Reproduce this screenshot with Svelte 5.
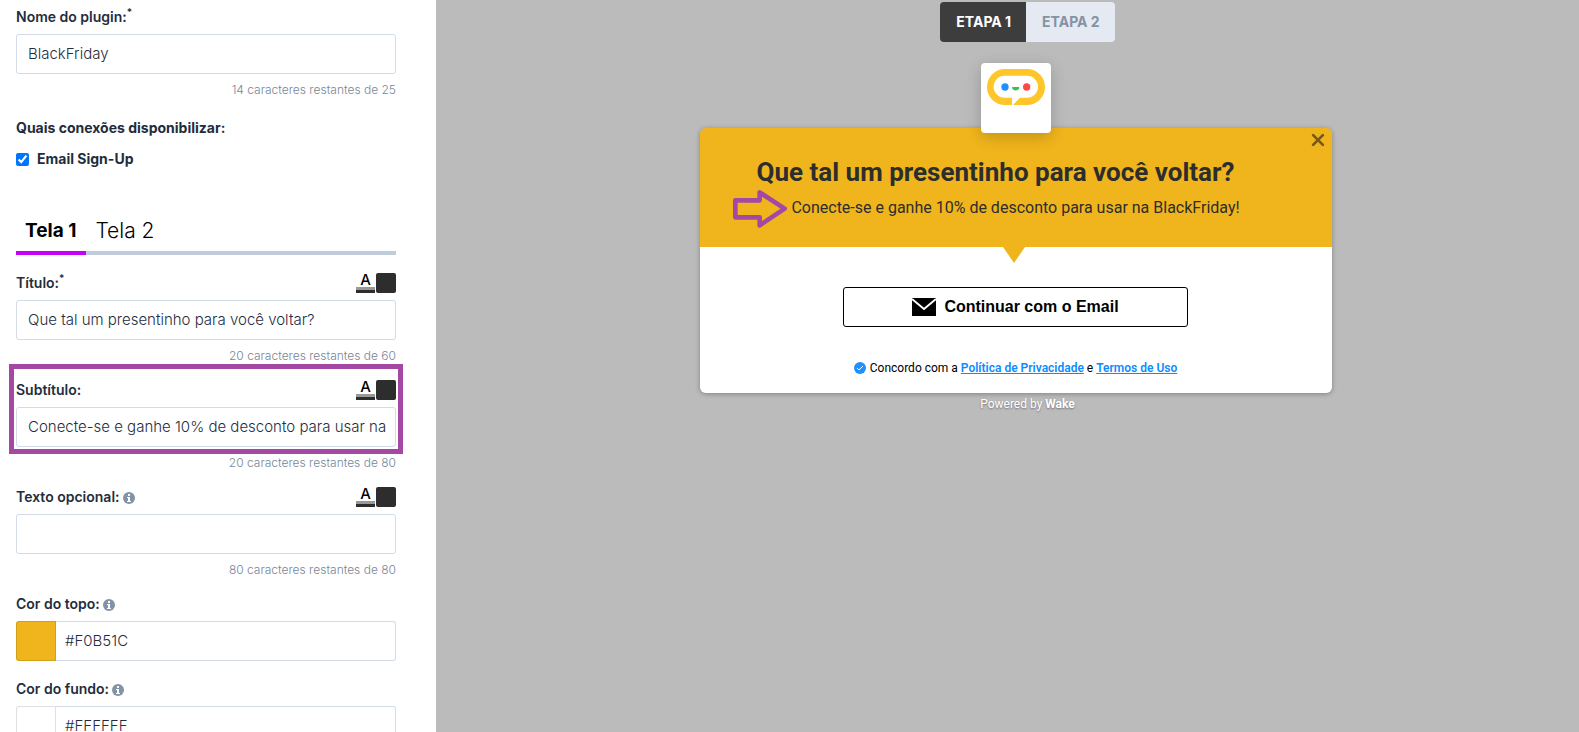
<script>
let pluginName = $state('BlackFriday')
let emailSignUp = $state(true)
let activeTab = $state(0)
let activeStep = $state(0)
let title = $state('Que tal um presentinho para você voltar?')
let subtitle = $state('Conecte-se e ganhe 10% de desconto para usar na BlackFriday!')
let optionalText = $state('')
let topColor = $state('#F0B51C')
let bottomColor = $state('#FFFFFF')

const tabs = ['Tela 1', 'Tela 2']
const steps = ['ETAPA 1', 'ETAPA 2']
</script>

{#snippet info()}
    <svg class="info" viewBox="0 0 12 12" aria-hidden="true">
        <circle cx="6" cy="6" r="6" />
        <path d="M5 2h2v2H5zM4 5h3v4h1v1H4V9h1V6H4z" fill="#fff" />
    </svg>
{/snippet}

{#snippet colorTools(name)}
    <div class="tools">
        <button type="button" class="text-color" aria-label="Cor do texto: {name}">A</button>
        <button type="button" class="swatch" aria-label="Cor: {name}"></button>
    </div>
{/snippet}

<div class="page">
    <form class="sidebar">
        <div class="field">
            <div class="field-head"><label for="plugin">Nome do plugin:<sup>*</sup></label></div>
            <input id="plugin" type="text" bind:value={pluginName}>
            <p class="hint">14 caracteres restantes de 25</p>
        </div>

        <div class="connections">
            <span>Quais conexões disponibilizar:</span>
            <label class="check"><input type="checkbox" bind:checked={emailSignUp}>Email Sign-Up</label>
        </div>

        <div class="tabs">
            {#each tabs as tab, i}
                <button type="button" class:active={activeTab === i} onclick={() => activeTab = i}>{tab}</button>
            {/each}
        </div>

        <div class="field">
            <div class="field-head"><label for="title">Título:<sup>*</sup></label>{@render colorTools('título')}</div>
            <input id="title" type="text" bind:value={title}>
            <p class="hint">20 caracteres restantes de 60</p>
        </div>

        <div class="field highlighted">
            <div class="field-head"><label for="subtitle">Subtítulo:</label>{@render colorTools('subtítulo')}</div>
            <input id="subtitle" type="text" bind:value={subtitle}>
            <p class="hint">20 caracteres restantes de 80</p>
        </div>

        <div class="field">
            <div class="field-head"><label for="optional">Texto opcional:{@render info()}</label>{@render colorTools('texto opcional')}</div>
            <input id="optional" type="text" bind:value={optionalText}>
            <p class="hint">80 caracteres restantes de 80</p>
        </div>

        <div class="field color">
            <div class="field-head"><label for="top-color">Cor do topo:{@render info()}</label></div>
            <div class="color-input">
                <span class="sample" style:background={topColor}></span>
                <input id="top-color" type="text" bind:value={topColor}>
            </div>
        </div>

        <div class="field color">
            <div class="field-head"><label for="bottom-color">Cor do fundo:{@render info()}</label></div>
            <div class="color-input">
                <span class="sample" style:background={bottomColor}></span>
                <input id="bottom-color" type="text" bind:value={bottomColor}>
            </div>
        </div>
    </form>

    <main class="preview">
        <div class="steps">
            {#each steps as step, i}
                <button class:active={activeStep === i} onclick={() => activeStep = i}>{step}</button>
            {/each}
        </div>

        <div class="popup">
            <div class="logo">
                <svg viewBox="0 0 174 108" aria-hidden="true">
                    <rect width="174" height="108" rx="54" fill="#ffc629" />
                    <rect x="20" y="20" width="133" height="66" rx="33" fill="#fff" />
                    <path d="M75 84v24h3l23-24z" fill="#fff" />
                    <circle cx="54" cy="54" r="11" fill="#1e90ff" />
                    <circle cx="119" cy="54" r="11" fill="#ff4848" />
                    <path d="M75 54h22c0 14-22 14-22 0z" fill="#3cc14e" />
                </svg>
            </div>

            <section class="card">
                <header style:background={topColor}>
                    <h1>{title}</h1>
                    <p class="subtitle">
                        <svg class="arrow" viewBox="0 0 162 114" aria-hidden="true">
                            <path d="M7 31h73V7l75 49-75 50V82H7z" />
                        </svg>
                        {subtitle}
                    </p>
                    <button class="close" aria-label="Fechar">
                        <svg viewBox="0 0 13 13"><path d="M2 2l9 9M11 2l-9 9" /></svg>
                    </button>
                    <svg class="pointer" viewBox="0 0 22 16" aria-hidden="true">
                        <path d="M0 0h22L11 16z" fill={topColor} />
                    </svg>
                </header>
                <div class="body" style:background={bottomColor}>
                    <button class="email">
                        <svg viewBox="0 0 24 18" aria-hidden="true">
                            <path d="M0 0h24v18H0z" />
                            <path d="M0 1l12 10L24 1" fill="none" stroke="#fff" stroke-width="2" />
                        </svg>
                        Continuar com o Email
                    </button>
                    <p class="terms">
                        <svg viewBox="0 0 12 12" aria-hidden="true">
                            <circle cx="6" cy="6" r="6" fill="#1e90ff" />
                            <path d="M3 6l2 2 4-4" fill="none" stroke="#fff" />
                        </svg>
                        <span>Concordo com a <a href="#privacidade">Política de Privacidade</a> e <a href="#termos">Termos de Uso</a></span>
                    </p>
                </div>
            </section>
        </div>
        <p class="powered">Powered by <strong>Wake</strong></p>
    </main>
</div>

<style>
:global(body) {
    margin: 0;
}

.page {
    display: flex;
    height: 100vh;
    overflow: hidden;
    font-family: Inter, "Liberation Sans", sans-serif;
    font-size: 14px;
    color: #1f2d3d;
}

button {
    font: inherit;
    border: 0;
    padding: 0;
    cursor: pointer;
}

p,
h1 {
    margin: 0;
}

.sidebar {
    box-sizing: border-box;
    flex: none;
    width: 436px;
    padding: 7px 40px 0 16px;
    background: #fff;
}

.field {
    position: relative;
    margin-bottom: 16px;
}

.field.color {
    margin-bottom: 18px;
}

.field-head {
    display: flex;
    justify-content: space-between;
    height: 20px;
    margin-bottom: 7px;
    line-height: 19px;
    font-weight: 600;
}

sup {
    font-size: 10px;
    line-height: 0;
}

input[type="text"] {
    box-sizing: border-box;
    display: block;
    width: 100%;
    height: 40px;
    padding: 0 8px 2px 11px;
    border: 1px solid #d3dce6;
    border-radius: 3px;
    background: #fff;
    font: inherit;
    font-size: 15px;
    font-weight: 300;
    color: #1f2d3d;
    outline: none;
}

.hint {
    margin-top: 8px;
    font-size: 12px;
    font-weight: 300;
    line-height: 16px;
    text-align: right;
    color: #76869a;
}

.info {
    width: 12px;
    height: 12px;
    margin-left: 3px;
    vertical-align: -2px;
    fill: #8492a6;
}

.connections {
    display: flex;
    flex-direction: column;
    gap: 11px;
    margin-top: 20px;
    line-height: 20px;
    font-weight: 700;
}

.check {
    display: flex;
    align-items: center;
    gap: 8px;
}

.check input {
    width: 13px;
    height: 13px;
    margin: 0;
    accent-color: #0075ff;
}

.tabs {
    display: flex;
    margin: 37px 0 18px;
    box-shadow: inset 0 -4px #c0ccda;
}

.tabs button {
    height: 49px;
    padding: 4px 9px 0;
    border-bottom: 4px solid transparent;
    background: none;
    font-size: 21px;
    font-weight: 300;
    color: #000;
}

.tabs .active {
    padding-right: 10px;
    border-color: #c800f5;
    font-size: 19px;
    font-weight: 700;
}

.tools {
    display: flex;
    gap: 1px;
}

.text-color {
    width: 19px;
    height: 20px;
    border-bottom: 3px solid #2d2d2d;
    box-shadow: inset 0 -3px #999;
    background: none;
    font-size: 15px;
    font-weight: 500;
    line-height: 12px;
    padding-bottom: 4px;
    color: #000;
}

.swatch {
    width: 20px;
    height: 20px;
    border-radius: 2px;
    background: #2d2d2d;
}

/* tutorial marker around the field being explained */
.highlighted::after {
    content: "";
    position: absolute;
    box-sizing: border-box;
    top: -16px;
    left: -7px;
    right: -7px;
    height: 90px;
    border: 5px solid #a349a4;
    pointer-events: none;
}

.color-input {
    display: flex;
}

.sample {
    box-sizing: border-box;
    flex: none;
    width: 40px;
    border: 1px solid rgba(0, 0, 0, 0.12);
    border-radius: 3px 0 0 3px;
}

.color-input input[type="text"] {
    padding-left: 9px;
    border-left: 0;
    border-radius: 0 3px 3px 0;
}

.preview {
    flex: 1;
    display: flex;
    flex-direction: column;
    align-items: center;
    padding: 2px 0 0 40px;
    background: #bbb;
}

.steps {
    display: flex;
    border-radius: 4px;
    overflow: hidden;
}

.steps button {
    height: 40px;
    padding: 0 15px 1px 16px;
    background: #e5e9f2;
    font-weight: 700;
    color: #8492a6;
}

.steps .active {
    background: #3d3d3d;
    color: #fff;
}

.popup {
    display: flex;
    flex-direction: column;
    align-items: center;
    width: 632px;
    max-width: 100%;
    margin: 21px 23px 0 0;
    font-family: Roboto, sans-serif;
}

.logo {
    z-index: 1;
    box-sizing: border-box;
    width: 70px;
    height: 70px;
    margin-bottom: -5px;
    padding: 6px;
    border-radius: 4px;
    background: #fff;
    box-shadow: 0 4px 16px rgba(0, 0, 0, 0.2);
}

.logo svg {
    display: block;
}

.card {
    width: 100%;
    border-radius: 6px;
    box-shadow: 0 1px 5px rgba(0, 0, 0, 0.3);
}

header {
    position: relative;
    box-sizing: border-box;
    height: 119px;
    padding: 28px 1px 0 0;
    border-radius: 6px 6px 0 0;
    text-align: center;
    color: #2d2d2d;
}

h1 {
    padding-right: 40px;
    font-size: 26px;
    line-height: 32px;
    font-weight: 700;
}

.subtitle {
    position: relative;
    width: fit-content;
    margin: 10px auto 0;
    font-size: 16px;
    line-height: 20px;
}

.arrow {
    position: absolute;
    right: 100%;
    top: -8px;
    width: 54px;
    height: 38px;
    margin-right: 4px;
    fill: none;
    stroke: #a349a4;
    stroke-width: 14;
    stroke-linejoin: round;
}

.close {
    position: absolute;
    top: 5px;
    right: 7px;
    background: none;
}

.close svg {
    display: block;
    width: 14px;
    height: 14px;
    stroke: #78591a;
    stroke-width: 2.5;
    stroke-linecap: round;
}

.pointer {
    position: absolute;
    top: 100%;
    left: calc(50% - 13px);
    width: 22px;
    height: 16px;
}

.body {
    display: flex;
    flex-direction: column;
    align-items: center;
    padding: 40px 1px 17px 0;
    border-radius: 0 0 6px 6px;
    color: #000;
}

.email {
    display: flex;
    align-items: center;
    justify-content: center;
    gap: 8px;
    width: 345px;
    height: 40px;
    border: 1px solid #000;
    border-radius: 3px;
    background: #fff;
    font-family: "Liberation Sans", sans-serif;
    font-size: 16px;
    font-weight: 700;
    color: #000;
}

.email svg {
    width: 24px;
    height: 18px;
}

.terms {
    display: flex;
    align-items: center;
    gap: 4px;
    margin-top: 33px;
    font-size: 12px;
    line-height: 16px;
}

.terms svg {
    width: 12px;
    height: 12px;
}

.terms a {
    font-weight: 600;
    color: #0d8bff;
}

.powered {
    margin-top: 3px;
    font-family: Roboto, sans-serif;
    font-size: 12px;
    line-height: 16px;
    color: #fff;
    text-shadow: 0 1px 2px rgba(0, 0, 0, 0.4);
}
</style>
